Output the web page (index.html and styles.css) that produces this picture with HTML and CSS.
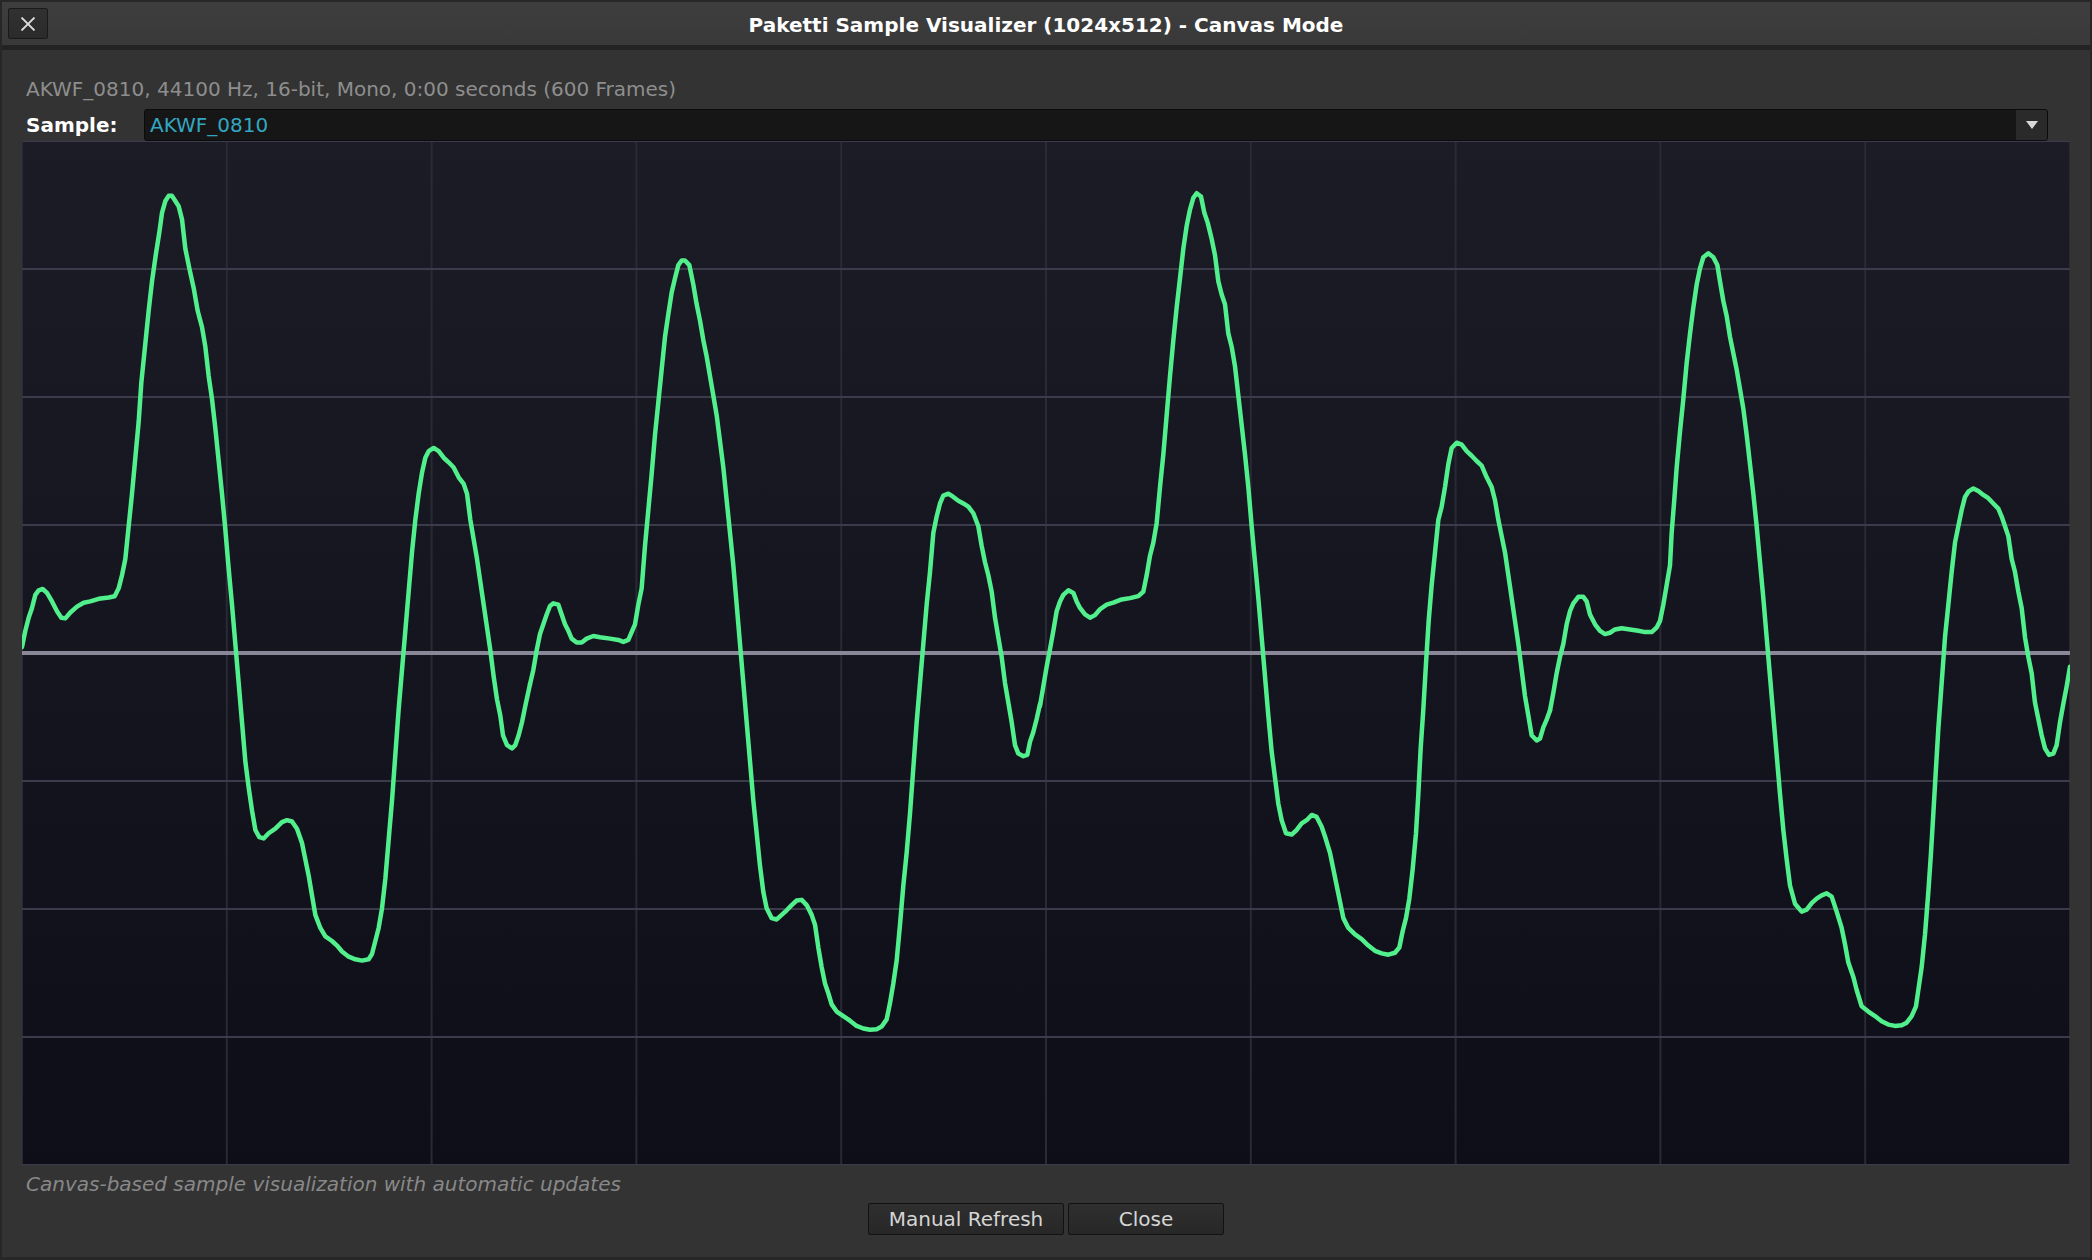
FILE: index.html
```html
<!DOCTYPE html>
<html lang="en">
<head>
  <meta charset="UTF-8">
  <title>Paketti Sample Visualizer</title>
  <link rel="stylesheet" href="styles.css">
</head>
<body>

<div class="window">
  <!-- Barra de título -->
  <div class="titlebar">
    <div class="tb-left">
      <button class="close-x" title="Close">
        <svg width="16" height="14" viewBox="0 0 16 14"><path d="M1.5 0.5 L14.5 13.5 M14.5 0.5 L1.5 13.5" stroke="#dcdcdc" stroke-width="1.8" fill="none"/></svg>
      </button>
    </div>
    <div class="title">Paketti Sample Visualizer (1024x512) - Canvas Mode</div>
    <div></div>
  </div>

  <div class="content">
    <div class="info">AKWF_0810, 44100 Hz, 16-bit, Mono, 0:00 seconds (600 Frames)</div>

    <div class="sample-row">
      <div class="label">Sample:</div>
      <div class="dropdown">
        <span class="value">AKWF_0810</span>
        <span class="arrow"><svg width="12" height="8" viewBox="0 0 12 8"><path d="M0 0 L12 0 L6 8 Z" fill="#d8d8d8"/></svg></span>
      </div>
    </div>

    <!-- Canvas del waveform -->
    <svg class="wave" width="2048" height="1024" viewBox="0 0 6144 1568" preserveAspectRatio="none">
      <g class="vgrid">
        <line x1="0" y1="0" x2="0" y2="1568"/>
        <line x1="614.4" y1="0" x2="614.4" y2="1568"/>
        <line x1="1228.8" y1="0" x2="1228.8" y2="1568"/>
        <line x1="1843.2" y1="0" x2="1843.2" y2="1568"/>
        <line x1="2457.6" y1="0" x2="2457.6" y2="1568"/>
        <line x1="3072" y1="0" x2="3072" y2="1568"/>
        <line x1="3686.4" y1="0" x2="3686.4" y2="1568"/>
        <line x1="4300.8" y1="0" x2="4300.8" y2="1568"/>
        <line x1="4915.2" y1="0" x2="4915.2" y2="1568"/>
        <line x1="5529.6" y1="0" x2="5529.6" y2="1568"/>
        <line x1="6144" y1="0" x2="6144" y2="1568"/>
      </g>
      <g class="hgrid">
        <line x1="0" y1="0" x2="6144" y2="0"/>
        <line x1="0" y1="196" x2="6144" y2="196"/>
        <line x1="0" y1="392" x2="6144" y2="392"/>
        <line x1="0" y1="588" x2="6144" y2="588"/>
        <line x1="0" y1="980" x2="6144" y2="980"/>
        <line x1="0" y1="1176" x2="6144" y2="1176"/>
        <line x1="0" y1="1372" x2="6144" y2="1372"/>
        <line x1="0" y1="1568" x2="6144" y2="1568"/>
      </g>
      <line class="center" x1="0" y1="784" x2="6144" y2="784"/>
      <g class="trace">
        <polyline points="0,775 10,750 20,730 30,715 40,695 50,688 62,686 75,692 90,705 105,720 118,730 130,731 145,722 165,713 185,707 205,705 230,701 260,699 278,697 290,685 300,665 310,640 320,590 330,540 340,485 350,430 358,370 370,310 380,260 390,215 402,172 412,140 420,110 430,92 440,84 450,84 460,92 470,100 480,120 490,165 502,195 515,225 527,260 540,285 550,315 560,360 570,395 580,440 590,490 600,540 610,595 620,655 630,710 640,770 650,830 660,890 670,950 680,990 690,1025 700,1055 712,1066 725,1068 740,1060 760,1053 780,1043 795,1040 810,1042 825,1053 840,1075 850,1100 860,1125 870,1155 880,1185 895,1205 910,1218 930,1225 945,1232 960,1241 980,1249 1000,1253 1020,1255 1040,1253 1050,1245 1060,1225 1070,1205 1080,1175 1090,1130 1100,1070 1110,1010 1120,940 1130,870 1140,810 1150,750 1160,690 1170,630 1180,580 1190,540 1200,508 1210,485 1220,475 1235,470 1250,475 1265,485 1280,492 1295,500 1310,515 1325,525 1335,540 1345,580 1355,610 1365,640 1375,675 1385,710 1395,745 1405,780 1415,820 1425,855 1435,880 1443,910 1455,925 1470,930 1480,925 1490,910 1500,890 1510,865 1524,832"/>
        <polyline transform="translate(1524 0)" points="0,832 10,810 20,780 30,755 40,740 50,725 60,712 70,708 85,710 95,725 105,740 115,750 125,762 140,768 155,768 170,762 190,758 210,760 240,762 265,764 280,767 295,764 305,752 315,740 325,710 335,685 345,620 355,565 365,510 375,450 385,400 395,350 405,300 415,265 425,232 435,210 445,190 455,183 465,183 478,190 490,220 500,250 510,275 520,305 530,330 540,360 550,390 560,420 570,460 580,500 590,550 600,600 610,650 620,710 630,770 640,830 650,890 660,950 670,1010 680,1060 690,1110 700,1150 710,1175 725,1190 740,1192 755,1185 770,1178 785,1170 800,1163 815,1162 830,1170 845,1185 855,1200 865,1235 875,1265 885,1290 895,1305 905,1322 920,1333 940,1340 960,1347 980,1355 1000,1359 1020,1361 1040,1360 1055,1356 1070,1345 1080,1320 1090,1290 1100,1255 1110,1200 1120,1140 1130,1090 1140,1030 1150,960 1160,890 1170,830 1180,770 1190,710 1200,660 1210,600 1220,575 1230,555 1240,543 1255,540 1270,545 1285,551 1300,555 1315,560 1330,570 1345,590 1355,620 1365,645 1375,665 1385,690 1395,730 1405,760 1415,790 1425,830 1435,860 1445,890 1455,925 1465,938 1480,942 1492,940 1500,920 1510,905 1520,885 1530,862"/>
        <polyline transform="translate(3054 0)" points="0,865 10,835 20,805 30,778 40,750 50,720 60,705 70,695 85,688 100,692 110,705 120,715 135,725 150,730 165,726 180,717 200,710 220,707 245,702 270,700 295,697 310,690 320,665 330,635 340,615 350,585 360,530 370,480 380,420 390,360 400,305 410,255 420,210 430,165 440,130 450,105 460,87 470,80 483,85 493,110 503,125 515,150 525,175 535,215 545,235 555,250 565,295 575,315 585,345 595,390 605,435 615,480 625,530 635,590 645,645 655,700 665,760 675,820 685,880 695,935 705,975 715,1015 725,1040 738,1060 755,1062 770,1055 785,1045 800,1040 815,1032 830,1035 845,1050 855,1065 870,1090 880,1115 890,1140 900,1165 910,1190 925,1205 945,1215 965,1222 985,1232 1005,1240 1025,1244 1045,1246 1065,1243 1078,1235 1088,1210 1098,1190 1108,1160 1118,1115 1128,1060 1135,1000 1142,930 1150,870 1158,800 1166,735 1175,680 1185,630 1195,580 1205,560 1215,530 1225,495 1235,470 1250,462 1265,465 1280,475 1295,482 1310,490 1325,497 1340,515 1355,530 1365,550 1375,580 1385,605 1395,630 1405,665 1415,700 1425,735 1435,770 1445,810 1455,850 1465,880 1475,910 1490,918 1500,915 1510,898 1520,886 1530,872"/>
        <polyline transform="translate(4584 0)" points="0,872 10,845 20,815 30,790 40,770 50,740 60,720 70,708 85,698 100,698 110,705 120,725 135,740 150,750 165,755 180,753 195,748 215,746 240,748 265,750 285,752 305,752 320,745 330,735 340,710 350,680 360,650 365,600 372,555 380,500 390,445 400,395 410,340 420,295 430,255 440,220 450,195 460,178 475,172 490,178 502,190 510,215 520,245 530,268 540,300 550,325 560,350 570,380 580,410 590,450 600,495 610,540 620,590 630,645 640,700 650,760 660,820 670,880 680,940 690,1000 700,1055 710,1100 720,1140 735,1168 755,1180 770,1177 785,1167 800,1160 815,1155 830,1152 845,1157 860,1180 875,1205 885,1230 895,1258 910,1280 920,1300 935,1325 955,1333 975,1340 995,1348 1015,1353 1035,1355 1055,1354 1070,1350 1085,1340 1098,1325 1105,1300 1115,1265 1125,1215 1135,1150 1143,1090 1150,1030 1158,960 1165,900 1175,830 1185,760 1195,710 1205,660 1215,615 1225,590 1235,565 1245,545 1255,537 1270,532 1285,536 1300,542 1315,547 1330,555 1345,563 1355,575 1365,590 1375,605 1385,640 1395,660 1405,690 1415,715 1425,760 1435,790 1445,815 1455,860 1465,885 1475,910 1485,930 1497,940 1510,938 1520,925 1530,890 1540,862 1550,835 1560,805"/>
      </g>
    </svg>

    <div class="caption">Canvas-based sample visualization with automatic updates</div>

    <div class="buttons">
      <button class="btn btn-refresh">Manual Refresh</button>
      <button class="btn btn-close">Close</button>
    </div>
  </div>
</div>

</body>
</html>
```

FILE: styles.css
```css
/* Ventana del visualizador */
* {
  box-sizing: border-box;
}

html, body {
  margin: 0;
  height: 100%;
}

body {
  background: #272727;
  font-family: "DejaVu Sans", Verdana, sans-serif;
  font-size: 20px;
  overflow: hidden;
}

.window {
  display: flex;
  flex-direction: column;
  height: 1260px;
  padding: 2px 2px 3px 2px;
}

.titlebar {
  height: 48px;
  flex: none;
  display: grid;
  grid-template-columns: 1fr auto 1fr;
  align-items: center;
  background: linear-gradient(#3e3e3e, #393939);
  border-bottom: 5px solid #232323;
}

.tb-left {
  display: flex;
  padding-left: 6px;
}

.close-x {
  width: 40px;
  height: 31px;
  padding: 0;
  display: flex;
  align-items: center;
  justify-content: center;
  background: linear-gradient(#313131, #2b2b2b);
  border: 1px solid #1a1a1a;
  border-radius: 2px;
}

.title {
  color: #fff;
  font-weight: bold;
  font-size: 20px;
  padding-top: 2px;
}

.content {
  flex: 1;
  background: #333333;
  padding: 0 20px;
}

.info {
  margin-top: 25px;
  padding-left: 4px;
  line-height: 28px;
  color: #8e8e8e;
}

.sample-row {
  display: flex;
  align-items: center;
  margin-top: 6px;
  height: 32px;
}

.label {
  width: 122px;
  padding-left: 4px;
  color: #fff;
  font-weight: bold;
}

.dropdown {
  width: 1904px;
  height: 32px;
  display: flex;
  align-items: center;
  background: #161616;
  border: 1px solid #0b0b0b;
  border-radius: 3px;
  overflow: hidden;
}

.dropdown .value {
  flex: 1;
  padding-left: 5px;
  color: #33a7c1;
}

.dropdown .arrow {
  width: 31px;
  height: 100%;
  display: flex;
  align-items: center;
  justify-content: center;
  background: #2a2a2a;
}

.wave {
  display: block;
  margin-top: 0;
  background: linear-gradient(#1b1c26, #0e0e18);
}

.vgrid line {
  stroke: #2a2a35;
  stroke-width: 2;
  vector-effect: non-scaling-stroke;
}

.hgrid line {
  stroke: #3c3b4c;
  stroke-width: 2;
  vector-effect: non-scaling-stroke;
}

.center {
  stroke: #8a8898;
  stroke-width: 4;
  vector-effect: non-scaling-stroke;
}

.trace polyline {
  fill: none;
  stroke: #52f08c;
  stroke-width: 4.5;
  stroke-linejoin: round;
  stroke-linecap: round;
  vector-effect: non-scaling-stroke;
}

.caption {
  margin-top: 5px;
  padding-left: 4px;
  line-height: 28px;
  color: #888888;
  font-style: italic;
}

.buttons {
  display: flex;
  justify-content: center;
  gap: 4px;
  margin-top: 5px;
}

.btn {
  height: 32px;
  padding: 0;
  font-family: "DejaVu Sans", Verdana, sans-serif;
  font-size: 20px;
  color: #d6d6d6;
  background: linear-gradient(#2f2f2f, #272727);
  border: 1px solid #121212;
  border-radius: 2px;
}

.btn-refresh {
  width: 196px;
}

.btn-close {
  width: 156px;
}
```
